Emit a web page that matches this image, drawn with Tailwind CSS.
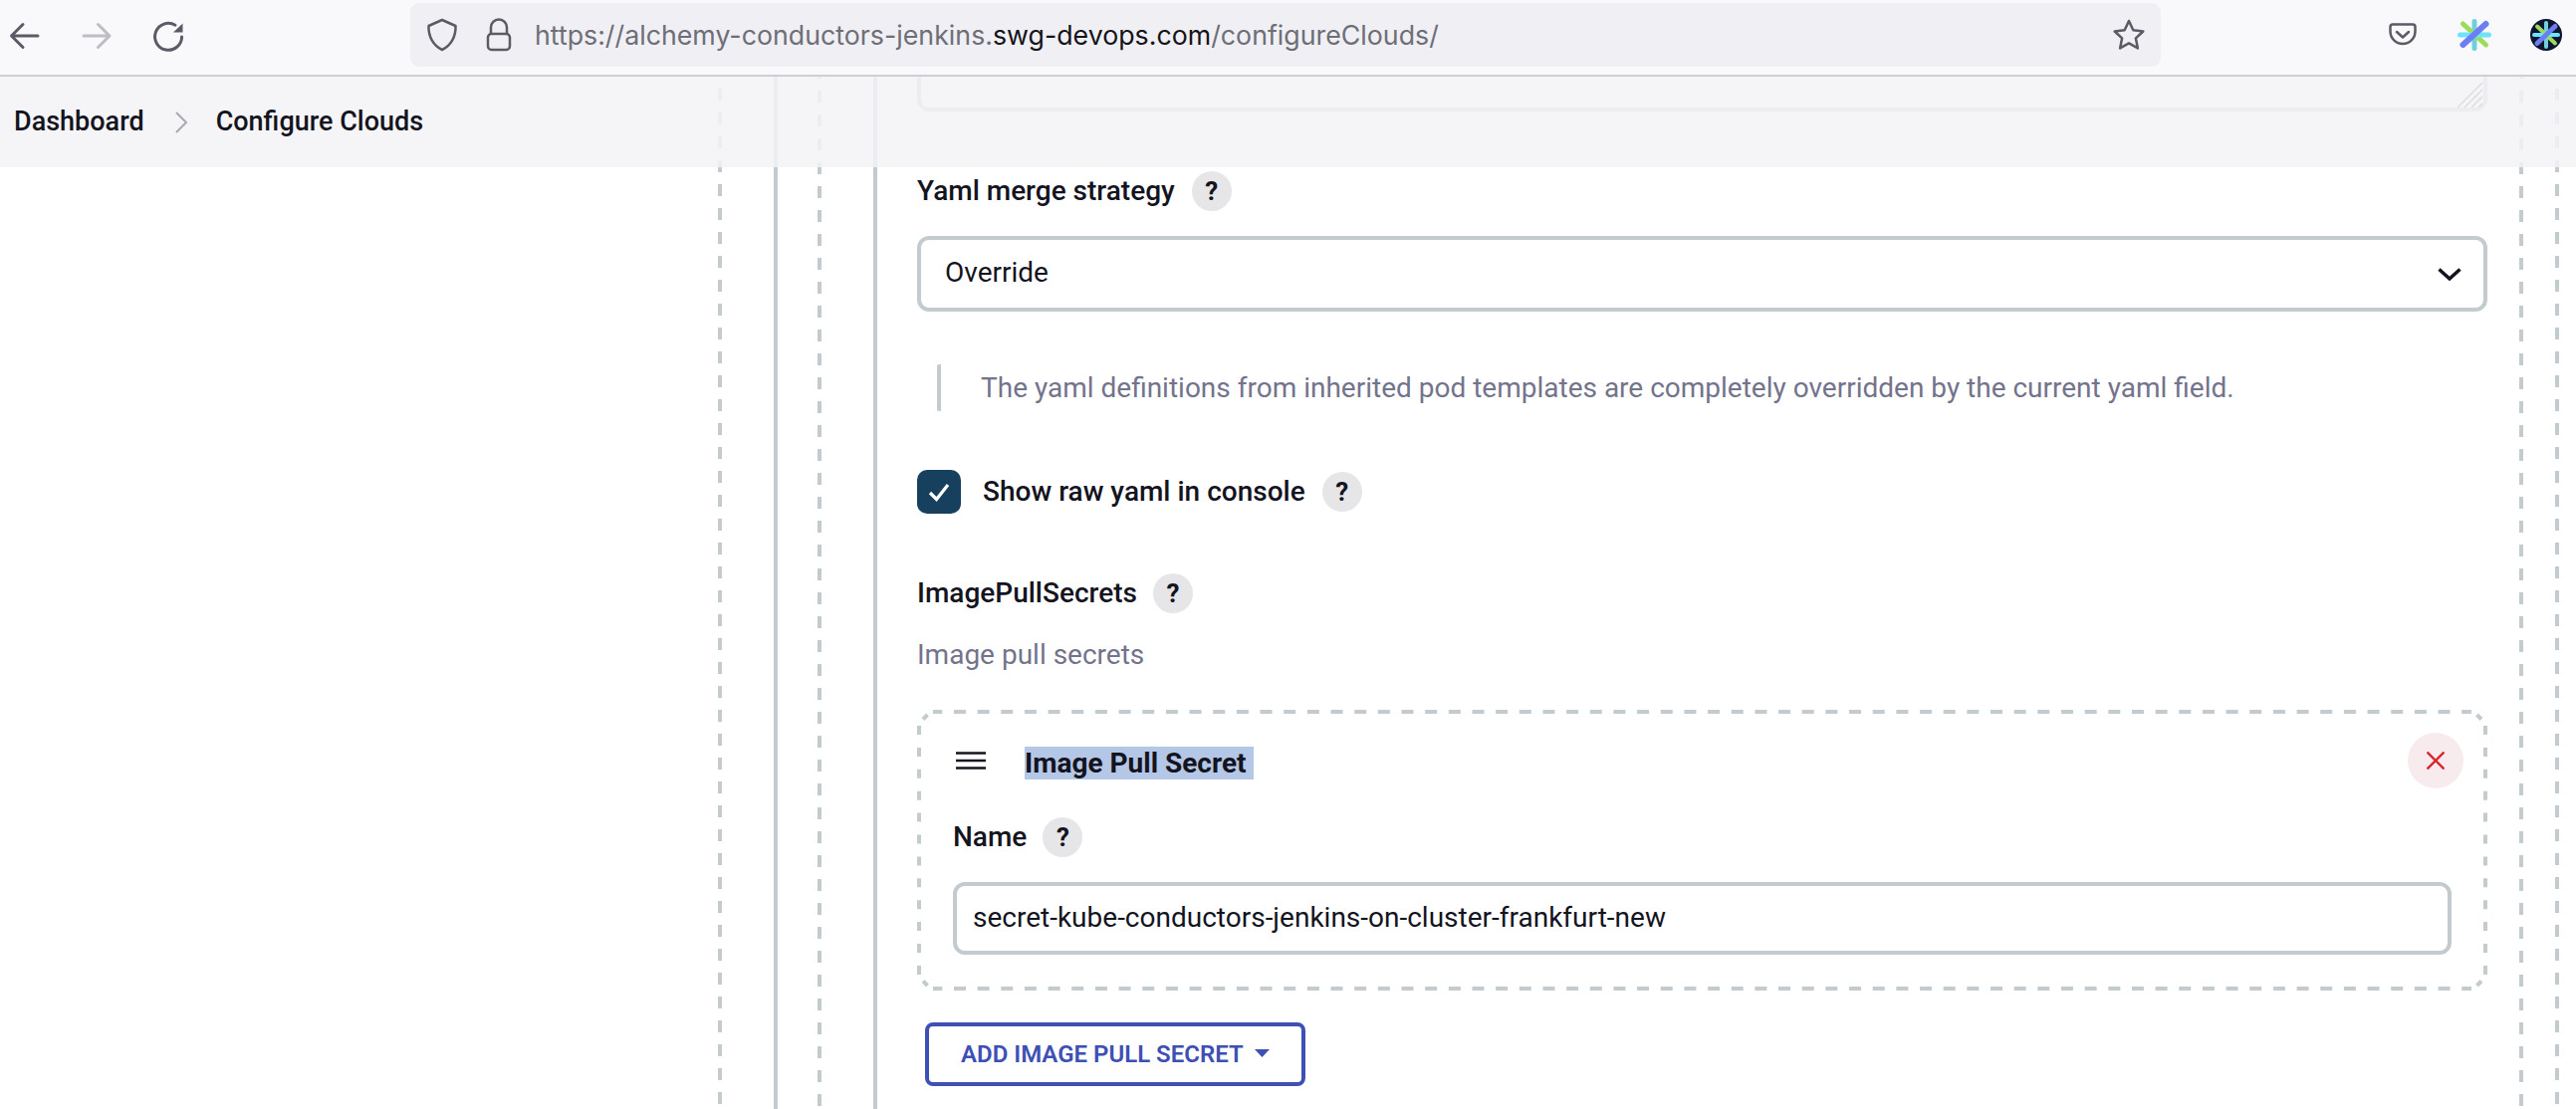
<!DOCTYPE html>
<html lang="en">
<head>
  <meta charset="UTF-8" />
  <title>Configure Clouds</title>
  <script src="https://cdn.jsdelivr.net/npm/@tailwindcss/browser@4"></script>
</head>
<body class="bg-white font-['Roboto',sans-serif] text-[#14141f] overflow-hidden">

  <!-- browser toolbar -->
  <header class="relative z-20 h-[77px] bg-[#f9f9fb] border-b-2 border-[#cfcfd2] flex items-start">
    <svg class="w-[200px] h-[75px] shrink-0" viewBox="0 0 200 75" fill="none" stroke-linecap="round" stroke-linejoin="round" stroke-width="3">
      <path d="M38 36H12M23 24.5 11.5 36 23 47.500" stroke="#5b5b66" />
      <path d="M84 36h26M98.500 24.500 110 36 98.500 47.500" stroke="#bdbdc4" />
      <path d="M176 25.200A13.500 13.500 0 1 0 182.600 37" stroke="#5b5b66" />
      <path d="M174 32.500h9.500v-9z" fill="#5b5b66" stroke="none" />
    </svg>
    <div class="ml-[212px] mt-[3px] w-[1758px] h-[64px] rounded-[9px] bg-[#f0f0f4] flex items-center">
      <svg class="ml-[16px] w-[32px] h-[34px] shrink-0" viewBox="0 0 32 34" fill="none" stroke="#5b5b66" stroke-width="2.500" stroke-linejoin="round">
        <path d="M16 2 29.500 8C30 19 24.500 28 16 32 7.500 28 2 19 2.500 8z" />
      </svg>
      <svg class="ml-[28px] w-[26px] h-[34px] shrink-0" viewBox="0 0 26 34" fill="none" stroke="#5b5b66" stroke-width="2.500">
        <path d="M5 16V9.500a8 8 0 0 1 16 0V16" />
        <rect x="2" y="16" width="22" height="16" rx="3.500" />
      </svg>
      <div class="ml-[23px] text-[26.75px] leading-none text-[#6e6e78] font-['Inter',sans-serif] whitespace-nowrap">https://alchemy-conductors-jenkins.<span class="text-[#15141a]">swg-devops.com</span>/configureClouds/</div>
      <svg class="ml-auto mr-[16px] w-[32px] h-[32px] shrink-0" viewBox="0 0 32 32" fill="none" stroke="#5b5b66" stroke-width="2.500" stroke-linejoin="round">
        <path d="M16 2l4.300 9.300 10 1.200-7.400 6.900 2 10L16 24.400 7.100 29.400l2-10L1.700 12.500l10-1.200z" />
      </svg>
    </div>
    <svg class="ml-[229px] mt-[19px] w-[28px] h-[30px] shrink-0" viewBox="0 0 28 30" fill="none" stroke="#5b5b66" stroke-width="2.500" stroke-linecap="round" stroke-linejoin="round">
      <path d="M4 5.500h20a2.500 2.500 0 0 1 2.500 2.500v4.500a12.500 12.500 0 0 1-25 0V8A2.500 2.500 0 0 1 4 5.500z" />
      <path d="M8 13l6 5.500 6-5.500" />
    </svg>
    <svg class="ml-[41px] mt-[19px] w-[34px] h-[32px] shrink-0" viewBox="0 0 34 32" fill="none" stroke-width="5" stroke-linecap="round">
      <path d="M17 2.500v27" stroke="#6fcfdc" />
      <path d="M5.500 5 28.500 26" stroke="#9bdc5c" />
      <path d="M2.500 16h29" stroke="#6fe3fb" />
      <path d="M28.500 5 5.500 26" stroke="#6a7ff0" stroke-width="6" />
    </svg>
    <svg class="ml-[38px] mt-[19px] w-[34px] h-[32px] shrink-0" viewBox="0 0 34 32" fill="none" stroke-width="4" stroke-linecap="round">
      <ellipse cx="17" cy="16" rx="16" ry="16" fill="#0d1530" />
      <path d="M17 4v24" stroke="#6fcfdc" />
      <path d="M8 7.500 26 24.500" stroke="#9bdc5c" />
      <path d="M5 16h24" stroke="#6fe3fb" />
      <path d="M26 7.500 8 24.500" stroke="#6a7ff0" stroke-width="5" />
    </svg>
  </header>

  <main class="relative h-[1037px] overflow-hidden">
    <!-- translucent breadcrumb bar -->
    <nav class="absolute top-0 inset-x-0 z-10 h-[91px] bg-[#f3f3f6]/85 flex items-center font-medium text-[27px]">
      <a class="ml-[14px]">Dashboard</a>
      <svg class="ml-[30px] w-[14px] h-[22px]" viewBox="0 0 14 22" fill="none" stroke="#a9a9b2" stroke-width="2"><path d="M2 1l10 10L2 21" /></svg>
      <a class="ml-[28px]">Configure Clouds</a>
    </nav>

    <!-- nested dashed / solid rails of the config form -->
    <div class="ml-[721px] w-[1849px] h-full bg-[linear-gradient(#c3cbcf_50%,transparent_50%)] bg-[length:4px_24px] bg-repeat-y bg-[position:0_12px]">
      <div class="h-full pl-[56px] pr-[36px] bg-[linear-gradient(#c3cbcf_50%,transparent_50%)] bg-[length:4px_24px] bg-repeat-y bg-[position:100%_12px]">
        <div class="h-full border-l-4 border-[#c3cbcf] pl-[40px]">
          <div class="h-full bg-[linear-gradient(#c3cbcf_50%,transparent_50%)] bg-[length:4px_24px] bg-repeat-y bg-[position:0_14px]">
            <div class="h-full pl-[56px] bg-[linear-gradient(#c3cbcf_50%,transparent_50%)] bg-[length:4px_24px] bg-repeat-y bg-[position:100%_14px]">
              <div class="flow-root h-full border-l-4 border-[#c3cbcf] pl-[40px] pr-[36px] text-[28px]">

                <!-- yaml textarea (scrolled under the bar) -->
                <div class="relative -mt-[20px] h-[55px] border-4 border-[#c3cbcf] rounded-[12px] bg-white">
                  <svg class="absolute right-0 bottom-0 w-[26px] h-[26px]" viewBox="0 0 26 26" fill="none" stroke="#606068" stroke-width="1.500">
                    <path d="M0 26 25 1M7 26 25 8M14 26 25 15M21 26 25 22" />
                  </svg>
                </div>

                <div class="mt-[60px] h-[40px] flex items-center">
                  <label class="font-medium">Yaml merge strategy</label>
                  <span class="ml-[17px] w-[40px] h-[40px] rounded-full bg-[#e6e6e8] flex items-center justify-center font-bold text-[26px]">?</span>
                </div>

                <div class="relative mt-[25px] h-[76px]">
                  <select class="w-full h-full appearance-none border-4 border-[#c3cbcf] rounded-[12px] bg-white pl-[24px] pb-[3px]">
                    <option>Override</option>
                  </select>
                  <svg class="absolute right-[26px] top-[32px] w-[24px] h-[13px]" viewBox="0 0 24 13" fill="none" stroke="#14141f" stroke-width="3.500"><path d="M1.500 1.500 12 11 22.500 1.500" /></svg>
                </div>

                <div class="mt-[53px] ml-[20px] h-[47px] border-l-4 border-[#c3cbcf] rounded-[2px] pl-[40px] flex items-center text-[#73738c]">
                  The yaml definitions from inherited pod templates are completely overridden by the current yaml field.
                </div>

                <div class="mt-[59px] h-[44px] flex items-center">
                  <span class="w-[44px] h-[44px] rounded-[10px] bg-[#17405e] flex items-center justify-center">
                    <svg class="w-[44px] h-[44px]" viewBox="0 0 44 44" fill="none" stroke="#fff" stroke-width="3.200"><path d="M13 23l6.500 6.500L31 15" /></svg>
                  </span>
                  <label class="ml-[22px] font-medium">Show raw yaml in console</label>
                  <span class="ml-[17px] w-[40px] h-[40px] rounded-full bg-[#e6e6e8] flex items-center justify-center font-bold text-[26px]">?</span>
                </div>

                <div class="mt-[60px] h-[40px] flex items-center">
                  <label class="font-medium">ImagePullSecrets</label>
                  <span class="ml-[16px] w-[40px] h-[40px] rounded-full bg-[#e6e6e8] flex items-center justify-center font-bold text-[26px]">?</span>
                </div>

                <p class="mt-[22px] h-[40px] leading-[40px] text-[#73738c]">Image pull secrets</p>

                <!-- repeatable item -->
                <section class="relative mt-[35px] h-[282px] pl-[36px] pr-[36px] pt-[23px]">
                  <svg class="absolute inset-0 w-[1577px] h-[282px]" viewBox="0 0 1577 282" fill="none" stroke="#c3cbcf" stroke-width="4">
                    <path d="M16 2H1561M16 280H1561" stroke-dasharray="12 11.660" stroke-dashoffset="2.700" />
                    <path d="M2 16V268M1575 16V268" stroke-dasharray="9 12.900" />
                    <path d="M6 9.500 10.500 5M1571 9.500 1566.500 5M6 272.500 10.500 277M1571 272.500 1566.500 277" />
                  </svg>
                  <div class="relative flex items-center h-[56px]">
                    <svg class="ml-[3px] w-[30px] h-[20px]" viewBox="0 0 30 20" fill="none" stroke="#14141f" stroke-width="2.600"><path d="M0 2.500h30M0 10h30M0 17.500h30" /></svg>
                    <h3 class="ml-[39px] mt-[5px] h-[33px] leading-[33px] font-bold bg-[#b5c7e6] w-[230px]">Image Pull Secret</h3>
                    <button class="ml-auto -mr-[12px] w-[56px] h-[56px] rounded-full bg-[#f8ebee] flex items-center justify-center">
                      <svg class="w-[18px] h-[18px]" viewBox="0 0 18 18" fill="none" stroke="#d9272e" stroke-width="2.400"><path d="M0.500 0.500l17 17M17.500 0.500l-17 17" /></svg>
                    </button>
                  </div>
                  <div class="relative mt-[29px] h-[40px] flex items-center">
                    <label class="font-medium">Name</label>
                    <span class="ml-[16px] w-[40px] h-[40px] rounded-full bg-[#e6e6e8] flex items-center justify-center font-bold text-[26px]">?</span>
                  </div>
                  <input class="relative mt-[25px] w-full h-[73px] border-4 border-[#c3cbcf] rounded-[12px] bg-white pl-[16px] pb-[2px]" value="secret-kube-conductors-jenkins-on-cluster-frankfurt-new" />
                </section>

                <button class="mt-[32px] ml-[8px] w-[382px] h-[64px] border-4 border-[#3e50b4] rounded-[8px] pl-[32px] flex items-center font-semibold text-[24px] text-[#3e50b4] whitespace-nowrap">
                  ADD IMAGE PULL SECRET
                  <svg class="ml-[11px] -mt-[3px] w-[15px] h-[8px]" viewBox="0 0 15 8" fill="#3e50b4"><path d="M0 0h15L7.500 8z" /></svg>
                </button>

              </div>
            </div>
          </div>
        </div>
      </div>
    </div>
  </main>
</body>
</html>
